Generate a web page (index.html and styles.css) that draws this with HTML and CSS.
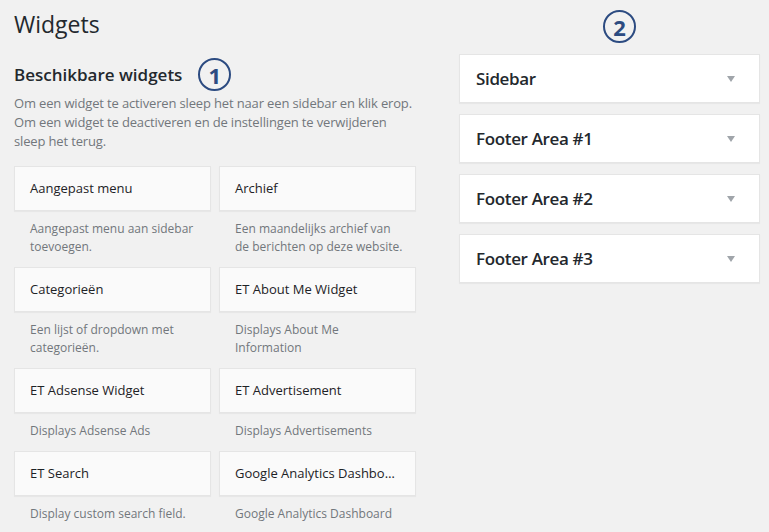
FILE: index.html
```html
<!DOCTYPE html>
<html lang="nl">
<head>
  <meta charset="UTF-8">
  <title>Widgets</title>
  <link rel="stylesheet" href="styles.css">
</head>
<body>
  <div class="wrap">
    <div class="available">
      <h1>Widgets</h1>
      <h2>Beschikbare widgets <span class="marker">1</span></h2>
      <p class="intro">Om een widget te activeren sleep het naar een sidebar en klik erop. Om een widget te deactiveren en de instellingen te verwijderen sleep het terug.</p>
      <div class="widget-list">
        <div class="widget">
          <div class="widget-top">Aangepast menu</div>
          <div class="widget-description">Aangepast menu aan sidebar toevoegen.</div>
        </div>
        <div class="widget">
          <div class="widget-top">Archief</div>
          <div class="widget-description">Een maandelijks archief van de berichten op deze website.</div>
        </div>
        <div class="widget">
          <div class="widget-top">Categorieën</div>
          <div class="widget-description">Een lijst of dropdown met categorieën.</div>
        </div>
        <div class="widget">
          <div class="widget-top">ET About Me Widget</div>
          <div class="widget-description">Displays About Me Information</div>
        </div>
        <div class="widget">
          <div class="widget-top">ET Adsense Widget</div>
          <div class="widget-description">Displays Adsense Ads</div>
        </div>
        <div class="widget">
          <div class="widget-top">ET Advertisement</div>
          <div class="widget-description">Displays Advertisements</div>
        </div>
        <div class="widget">
          <div class="widget-top">ET Search</div>
          <div class="widget-description">Display custom search field.</div>
        </div>
        <div class="widget">
          <div class="widget-top">Google Analytics Dashboard</div>
          <div class="widget-description">Google Analytics Dashboard</div>
        </div>
      </div>
    </div>

    <div class="sidebars">
      <div class="marker-row"><span class="marker">2</span></div>
      <div class="sidebar-box"><h3>Sidebar</h3><span class="toggle"></span></div>
      <div class="sidebar-box"><h3>Footer Area #1</h3><span class="toggle"></span></div>
      <div class="sidebar-box"><h3>Footer Area #2</h3><span class="toggle"></span></div>
      <div class="sidebar-box"><h3>Footer Area #3</h3><span class="toggle"></span></div>
    </div>
  </div>
</body>
</html>
```

FILE: styles.css
```css
/* widgets admin screen */
body {
  margin: 0;
  background-color: #f1f1f1;
  font-family: "Open Sans", "Liberation Sans", sans-serif;
  color: #23282d;
  overflow: hidden;
}
.wrap {
  display: flex;
  padding: 0 9px 0 14px;
}
.available {
  width: 402px;
}
h1 {
  margin: 10px 0 0;
  font-size: 23px;
  line-height: 29px;
  font-weight: 400;
}
h2 {
  display: flex;
  align-items: center;
  height: 33px;
  margin: 19px 0 0;
  font-size: 17px;
  line-height: 20px;
  font-weight: 600;
}
h2 .marker {
  margin-left: 16px;
}
.marker {
  display: inline-flex;
  align-items: center;
  justify-content: center;
  box-sizing: border-box;
  width: 33px;
  height: 33px;
  border: 2px solid #2c4b81;
  border-radius: 50%;
  color: #2c4b81;
  font-size: 22px;
  font-weight: 700;
  line-height: 1;
}
.intro {
  margin: 3px 0 0;
  font-size: 13px;
  line-height: 19px;
  letter-spacing: -0.15px;
  color: #72777c;
}
.widget-list {
  display: grid;
  grid-template-columns: 197px 197px;
  column-gap: 8px;
  margin-top: 15px;
}
.widget-top {
  box-sizing: border-box;
  height: 45px;
  padding: 0 15px;
  background-color: #fafafa;
  border: 1px solid #e5e5e5;
  box-shadow: 0 1px 1px rgba(0, 0, 0, 0.04);
  font-size: 13px;
  line-height: 43px;
  font-weight: 500;
  color: #1d2226;
  white-space: nowrap;
  overflow: hidden;
  text-overflow: ellipsis;
}
.widget-description {
  padding: 9px 12px 11px 16px;
  font-size: 12px;
  line-height: 18px;
  color: #72777c;
}
.sidebars {
  width: 301px;
  margin-left: 43px;
}
.marker-row {
  padding: 10px 0 11px 144px;
  height: 33px;
}
.sidebar-box {
  display: flex;
  align-items: center;
  justify-content: space-between;
  box-sizing: border-box;
  height: 49px;
  margin-bottom: 11px;
  padding: 0 24px 0 16px;
  background-color: #fff;
  border: 1px solid #e5e5e5;
  box-shadow: 0 1px 1px rgba(0, 0, 0, 0.04);
}
.sidebar-box h3 {
  margin: 0;
  font-size: 17px;
  font-weight: 600;
  letter-spacing: -0.35px;
}
.toggle {
  width: 0;
  height: 0;
  border-left: 4px solid transparent;
  border-right: 4px solid transparent;
  border-top: 6px solid #a0a5aa;
}
```
